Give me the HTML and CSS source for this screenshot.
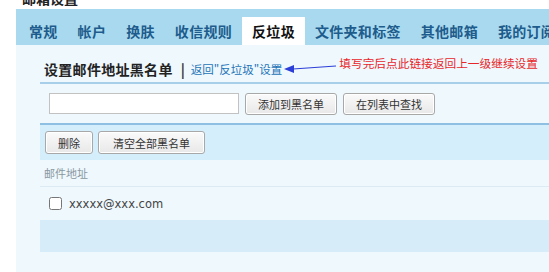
FILE: index.html
```html
<!DOCTYPE html>
<html lang="zh-CN">
<head>
    <meta charset="UTF-8">
    <title>邮箱设置</title>
    <link rel="stylesheet" href="styles.css">
</head>
<body>
<div class="page-title"><span>邮箱设置</span></div>

<!-- Tabs -->
<div class="tabs">
    <a class="tab">常规</a>
    <a class="tab">帐户</a>
    <a class="tab">换肤</a>
    <a class="tab">收信规则</a>
    <a class="tab active">反垃圾</a>
    <a class="tab">文件夹和标签</a>
    <a class="tab">其他邮箱</a>
    <a class="tab">我的订阅</a>
</div>

<div class="content">
    <div class="heading">
        <h2>设置邮件地址黑名单</h2>
        <span class="sep">|</span>
        <a class="back-link">返回"反垃圾"设置</a>
        <svg class="arrow" width="52" height="10" viewBox="0 0 52 10">
            <path d="M9 5 L52 2" stroke="#2b3ed8" stroke-width="1.2" fill="none"/>
            <path d="M0 5 L10 1 L10 9 Z" fill="#2b3ed8"/>
        </svg>
        <span class="note">填写完后点此链接返回上一级继续设置</span>
    </div>

    <div class="add-row">
        <input type="text" class="addr-input">
        <button>添加到黑名单</button>
        <button>在列表中查找</button>
    </div>

    <div class="toolbar">
        <button>删除</button>
        <button class="wide">清空全部黑名单</button>
    </div>

    <div class="list-head">邮件地址</div>
    <div class="list-row">
        <input type="checkbox">
        <span class="email">xxxxx@xxx.com</span>
    </div>
    <div class="list-foot"></div>
</div>
</body>
</html>
```

FILE: styles.css
```css
body {
    margin: 0;
    font-family: "Noto Sans CJK SC", sans-serif;
    background-color: #fff;
    overflow: hidden;
}

.page-title {
    height: 9px;
    overflow: hidden;
    padding-left: 22px;
}

.page-title span {
    display: block;
    margin-top: -11px;
    font-size: 14px;
    line-height: 18px;
    font-weight: bold;
    color: #222;
}

.tabs {
    margin-left: 16px;
    height: 36px;
    background-color: #a9d9ee;
    display: flex;
    align-items: flex-end;
    padding-left: 3px;
    white-space: nowrap;
}

.tab {
    font-size: 14px;
    letter-spacing: 0.3px;
    font-weight: bold;
    color: #1d5c8c;
    height: 28px;
    line-height: 28px;
    padding: 0 10px;
}

.tab.active {
    background-color: #fff;
    color: #111;
    padding: 0 10px;
    width: 44px;
}

.content {
    margin-left: 16px;
    background-color: #eef8fd;
    height: 227px;
    padding-left: 24px;
}

.heading {
    height: 39px;
    display: flex;
    align-items: center;
    padding-left: 4px;
    padding-top: 10px;
    border-bottom: 2px solid #a7cfea;
    box-sizing: border-box;
}

.heading h2 {
    margin: 0;
    font-size: 14px;
    letter-spacing: 0.3px;
    font-weight: bold;
    color: #222;
}

.sep {
    font-size: 14px;
    font-weight: bold;
    color: #333;
    margin: 0 6px 0 8px;
}

.back-link {
    font-size: 11.5px;
    color: #2474b8;
}

.arrow {
    margin-left: 2px;
}

.note {
    font-size: 11.7px;
    color: #e8262a;
    margin-left: 3px;
    position: relative;
    top: -6px;
}

.add-row {
    height: 41px;
    display: flex;
    align-items: center;
    padding-left: 9px;
    border-bottom: 2px solid #8dc0e3;
    box-sizing: border-box;
}

.addr-input {
    width: 190px;
    height: 21px;
    box-sizing: border-box;
    border: 1px solid #c2c2c2;
    background: #fff;
    margin: 0 6px 0 0;
}

button {
    height: 22px;
    font-family: "Noto Sans CJK SC", sans-serif;
    font-size: 11px;
    color: #333;
    background: linear-gradient(#fafafa, #e8e8e8);
    border: 1px solid #a8a8a8;
    border-radius: 3px;
    padding: 0 12px;
    margin-right: 6px;
    box-shadow: inset 0 0 0 1px #fff;
}

.toolbar {
    height: 35px;
    background-color: #d5eefb;
    display: flex;
    align-items: center;
    padding-left: 5px;
}

.toolbar button {
    height: 23px;
    margin-right: 5px;
}

.toolbar button.wide {
    padding: 0 14px;
}

.list-head {
    height: 26px;
    line-height: 26px;
    font-size: 11px;
    color: #8a97a0;
    padding-left: 4px;
    border-bottom: 1px solid #dcebf3;
}

.list-row {
    height: 33px;
    display: flex;
    align-items: center;
    padding-left: 9px;
}

.list-row input {
    width: 13px;
    height: 13px;
    margin: 0 7px 0 0;
}

.email {
    font-family: "DejaVu Sans", sans-serif;
    font-size: 11.5px;
    color: #444;
}

.list-foot {
    height: 32px;
    background-color: #d6edf9;
}
```
